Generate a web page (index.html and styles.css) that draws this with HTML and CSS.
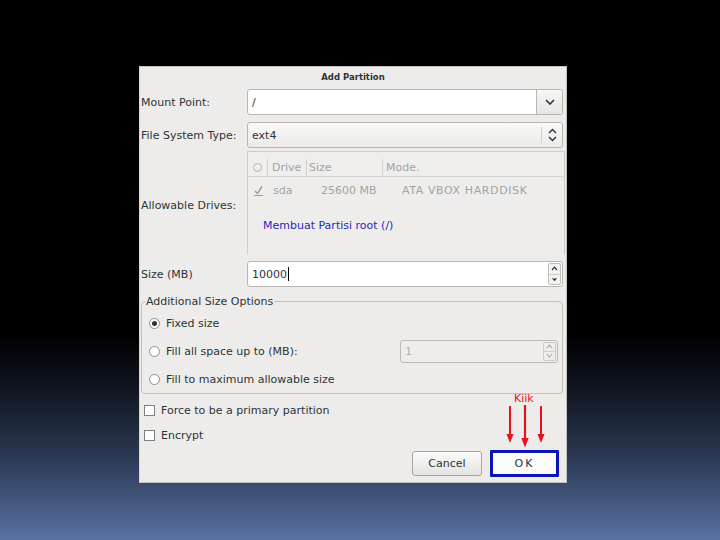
FILE: index.html
```html
<!DOCTYPE html>
<html>
<head>
<meta charset="utf-8">
<link rel="stylesheet" href="styles.css">
</head>
<body>
<div class="stage">
  <div class="dialog">
    <div class="titlebar">Add Partition</div>
    <div class="form">
      <div class="row row-mount">
        <div class="label">Mount Point:</div>
        <div class="field combo">
          <div class="combo-entry">/</div>
          <div class="combo-btn">
            <svg width="10" height="6" viewBox="0 0 10 6"><path d="M1 1 L5 5 L9 1" fill="none" stroke="#2e3436" stroke-width="1.6"/></svg>
          </div>
        </div>
      </div>
      <div class="row row-fs">
        <div class="label">File System Type:</div>
        <div class="field select">
          <div class="select-text">ext4</div>
          <div class="select-sep"></div>
          <div class="select-arrows">
            <svg width="9" height="14" viewBox="0 0 9 14"><path d="M1 5 L4.5 1.5 L8 5 M1 9 L4.5 12.5 L8 9" fill="none" stroke="#2e3436" stroke-width="1.4"/></svg>
          </div>
        </div>
      </div>
      <div class="row row-tree">
        <div class="label label-tree">Allowable Drives:</div>
        <div class="tree">
          <div class="tree-head">
            <div class="th th-check"><span class="head-circle"></span></div>
            <div class="th th-drive">Drive</div>
            <div class="th th-size">Size</div>
            <div class="th th-model">Mode.</div>
          </div>
          <div class="tree-row">
            <div class="td td-check"><svg width="11" height="11" viewBox="0 0 11 11"><path d="M2 6 L4.5 8.5 L9 1.5" fill="none" stroke="#9a9a9a" stroke-width="1.4"/><path d="M1 10.5 H10" stroke="#9a9a9a" stroke-width="1"/></svg></div>
            <div class="td td-drive">sda</div>
            <div class="td td-size">25600 MB</div>
            <div class="td td-model">ATA VBOX HARDDISK</div>
          </div>
          <div class="tree-note">Membuat Partisi root (/)</div>
        </div>
      </div>
      <div class="row row-size">
        <div class="label">Size (MB)</div>
        <div class="field spin">
          <div class="spin-text">10000<span class="caret"></span></div>
          <div class="spin-btns">
            <div class="spin-up"><svg width="7" height="5" viewBox="0 0 7 5"><path d="M1 4 L3.5 1.2 L6 4" fill="none" stroke="#2e3436" stroke-width="1.2"/></svg></div>
            <div class="spin-down"><svg width="7" height="5" viewBox="0 0 7 5"><path d="M1.5 1.5 L3.5 3.8 L5.5 1.5" fill="#2e3436" stroke="#2e3436" stroke-width="1"/></svg></div>
          </div>
        </div>
      </div>
      <fieldset class="frame">
        <legend class="frame-title">Additional Size Options</legend>
        <div class="frame-body">
          <div class="opt">
            <span class="radio checked"></span><span class="opt-label">Fixed size</span>
          </div>
          <div class="opt">
            <span class="radio"></span><span class="opt-label">Fill all space up to (MB):</span>
            <div class="spin-dis">
              <div class="spin-dis-text">1</div>
              <div class="spin-dis-btns">
                <div class="spin-up"><svg width="7" height="5" viewBox="0 0 7 5"><path d="M1 4 L3.5 1.2 L6 4" fill="none" stroke="#a8a8a8" stroke-width="1.1"/></svg></div>
                <div class="spin-down"><svg width="7" height="5" viewBox="0 0 7 5"><path d="M1 1.2 L3.5 4 L6 1.2" fill="none" stroke="#a8a8a8" stroke-width="1.1"/></svg></div>
              </div>
            </div>
          </div>
          <div class="opt">
            <span class="radio"></span><span class="opt-label">Fill to maximum allowable size</span>
          </div>
        </div>
      </fieldset>
      <div class="check-row check-first">
        <span class="checkbox"></span><span class="check-label">Force to be a primary partition</span>
      </div>
      <div class="check-row check-second">
        <span class="checkbox"></span><span class="check-label">Encrypt</span>
      </div>
      <div class="buttons">
        <button class="btn btn-cancel">Cancel</button>
        <button class="btn btn-ok">OK</button>
      </div>
    </div>
    <div class="note-kiik">Kiik</div>
    <svg class="arrows" width="50" height="48" viewBox="0 0 50 48">
      <path d="M10 3 V33" stroke="#e5141a" stroke-width="2"/>
      <path d="M6.5 31 L13.5 31 L10 40 Z" fill="#e5141a"/>
      <path d="M25 2 V37" stroke="#e5141a" stroke-width="2.2"/>
      <path d="M21.3 35 L28.7 35 L25 44.5 Z" fill="#e5141a"/>
      <path d="M41 3 V33" stroke="#e5141a" stroke-width="2"/>
      <path d="M37.5 31 L44.5 31 L41 40 Z" fill="#e5141a"/>
    </svg>
  </div>
</div>
</body>
</html>
```

FILE: styles.css
```css
html, body {
  margin: 0;
  padding: 0;
}
body {
  width: 720px;
  height: 540px;
  overflow: hidden;
  background: linear-gradient(to bottom, #000 0%, #000 62%, #141a26 74%, #2c3a55 85%, #44577f 93%, #5872a3 100%);
  font-family: "DejaVu Sans", "Liberation Sans", sans-serif;
  font-size: 11px;
  color: #2e3436;
}
.stage {
  padding: 66px 0 0 139px;
}
.dialog {
  position: relative;
  width: 428px;
  height: 417px;
  box-sizing: border-box;
  background: #edeceb;
  border: 1px solid #c4c2bf;
  border-left-color: #d8d6d3;
}
.titlebar {
  height: 21px;
  line-height: 21px;
  text-align: center;
  font-weight: bold;
  font-size: 8.5px;
  color: #2e3436;
}
.form {
  padding: 0 3px 0 1px;
  display: flex;
  flex-direction: column;
}
.row {
  display: flex;
  align-items: center;
}
.label {
  width: 106px;
  flex: none;
  white-space: nowrap;
}
.label-tree { padding-top: 6px; }
.row-mount { height: 26px; margin-top: 1px; }
.row-fs { height: 26px; margin-top: 7px; }
.row-tree { height: 103px; margin-top: 3px; margin-right: -2px; }
.row-size { height: 26px; margin-top: 7px; }

.field {
  flex: 1;
  height: 100%;
  box-sizing: border-box;
  border: 1px solid #b9b6b1;
  border-radius: 3px;
  display: flex;
  align-items: stretch;
}
.combo { background: #fff; }
.combo-entry {
  flex: 1;
  padding-left: 4px;
  display: flex;
  align-items: center;
}
.combo-btn {
  width: 25px;
  border-left: 1px solid #b9b6b1;
  background: linear-gradient(#f7f7f6, #e6e5e3);
  border-radius: 0 3px 3px 0;
  display: flex;
  align-items: center;
  justify-content: center;
}
.select {
  background: linear-gradient(#f9f9f8, #ebeae8);
}
.select-text {
  flex: 1;
  padding-left: 4px;
  display: flex;
  align-items: center;
}
.select-sep {
  width: 1px;
  background: #d2d0cc;
  margin: 4px 0;
}
.select-arrows {
  width: 20px;
  display: flex;
  align-items: center;
  justify-content: center;
}

.tree {
  flex: 1;
  height: 100%;
  box-sizing: border-box;
  border: 1px solid #cfccc8;
  border-bottom: none;
  background: #eeedec;
  overflow: hidden;
  color: #a3a3a3;
}
.tree-head {
  height: 25px;
  box-sizing: border-box;
  padding-top: 7px;
  display: grid;
  grid-template-columns: 19px 39px 76px 1fr;
  border-bottom: 1px solid #d6d4d0;
  background: #efeeed;
}
.th {
  display: flex;
  align-items: center;
  border-left: 1px solid #d4d2ce;
}
.th-check { border-left: none; justify-content: center; }
.th-drive { padding-left: 4px; }
.th-size { padding-left: 2px; }
.th-model { padding-left: 3px; }
.head-circle {
  width: 7px;
  height: 7px;
  border: 1px solid #b3b3b3;
  border-radius: 50%;
}
.tree-row {
  height: 24px;
  padding-top: 1px;
  display: grid;
  grid-template-columns: 19px 39px 76px 1fr;
  align-items: center;
}
.td-check { display: flex; justify-content: center; padding-left: 2px; }
.td-drive { padding-left: 6px; }
.td-size { padding-left: 15px; white-space: nowrap; }
.td-model { padding-left: 20px; white-space: nowrap; letter-spacing: 0.6px; }
.tree-note {
  margin-top: 17px;
  padding-left: 15px;
  color: #2a2ab8;
}

.spin { background: #fff; padding: 1px; }
.spin-text {
  flex: 1;
  padding-left: 3px;
  display: flex;
  align-items: center;
}
.caret {
  display: inline-block;
  width: 1px;
  height: 14px;
  background: #000;
  margin-left: 1px;
}
.spin-btns {
  width: 11px;
  border: 1px solid #c2bfbb;
  border-radius: 2px;
  background: #f3f3f2;
  display: flex;
  flex-direction: column;
}
.spin-up, .spin-down {
  flex: 1;
  display: flex;
  align-items: center;
  justify-content: center;
}
.spin-up { border-bottom: 1px solid #d0cdc9; }

.frame {
  margin: 8px 0 0 0;
  padding: 0;
  height: 99px;
  box-sizing: border-box;
  border: 1px solid #c3c0bb;
  border-radius: 4px;
  min-width: 0;
}
.frame-title {
  margin-left: 3px;
  padding: 0 1px;
  font-size: 11px;
  line-height: 13px;
  color: #2e3436;
}
.frame-body {
  padding-top: 1px;
  padding-left: 7px;
  padding-right: 4px;
  box-sizing: border-box;
}
.opt {
  height: 28px;
  display: flex;
  align-items: center;
  flex: none;
}
.radio {
  width: 9px;
  height: 9px;
  border: 1px solid #8f8f8f;
  border-radius: 50%;
  background: #fff;
  flex: none;
  position: relative;
}
.radio.checked::after {
  content: "";
  position: absolute;
  left: 2px;
  top: 2px;
  width: 5px;
  height: 5px;
  border-radius: 50%;
  background: #2e3436;
}
.opt-label { margin-left: 6px; }
.spin-dis {
  margin-left: auto;
  width: 158px;
  height: 23px;
  box-sizing: border-box;
  border: 1px solid #bdbab5;
  border-radius: 3px;
  background: #eeedec;
  display: flex;
  padding: 1px;
}
.spin-dis-text {
  flex: 1;
  padding-left: 3px;
  display: flex;
  align-items: center;
  color: #b0b0b0;
}
.spin-dis-btns {
  width: 11px;
  border: 1px solid #cfccc8;
  border-radius: 2px;
  display: flex;
  flex-direction: column;
}

.check-row {
  height: 20px;
  display: flex;
  align-items: center;
  padding-left: 3px;
}
.check-first { margin-top: 6px; }
.check-second { margin-top: 5px; }
.checkbox {
  width: 9px;
  height: 9px;
  border: 1px solid #7f7f7f;
  background: #fff;
  flex: none;
}
.check-label { margin-left: 6px; }

.buttons {
  display: flex;
  justify-content: flex-end;
  align-items: center;
  gap: 8px;
  margin-top: 5px;
  padding-right: 4px;
  height: 27px;
}
.btn {
  font-family: inherit;
  font-size: 11px;
  color: #2e3436;
  box-sizing: border-box;
  background: linear-gradient(#fbfbfb, #e4e3e1);
  border-radius: 3px;
  padding: 0;
}
.btn-cancel {
  width: 70px;
  height: 25px;
  border: 1px solid #a9a6a2;
}
.btn-ok {
  width: 69px;
  height: 27px;
  border: 3px solid #0b14b8;
  border-radius: 1px;
  background: #fbfbfb;
  letter-spacing: 2px;
}

.note-kiik {
  position: absolute;
  left: 374px;
  top: 325px;
  color: #e5141a;
  font-size: 11px;
}
.arrows {
  position: absolute;
  left: 360px;
  top: 336px;
}
```
